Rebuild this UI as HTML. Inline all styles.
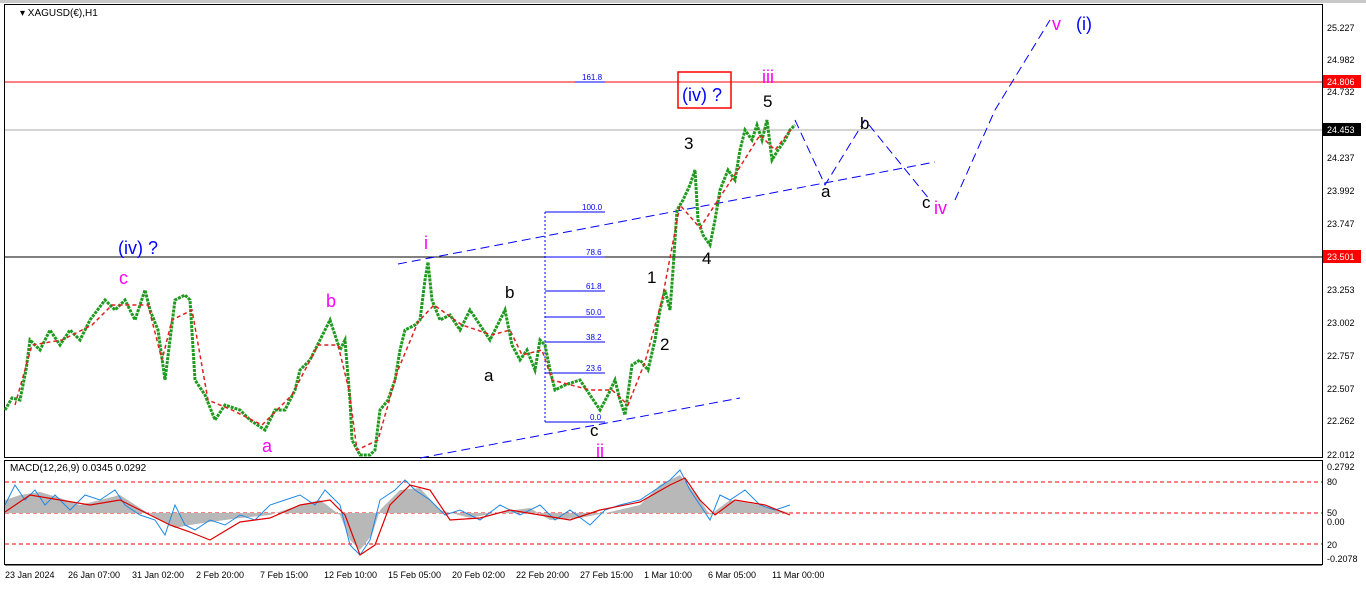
<!DOCTYPE html><html><head><style>body{margin:0;background:#fff;width:1366px;height:588px;overflow:hidden;font-family:"Liberation Sans",sans-serif}svg text{font-family:"Liberation Sans",sans-serif}</style></head><body>
<svg width="1366" height="588" xmlns="http://www.w3.org/2000/svg">
<rect width="1366" height="588" fill="#fff"/>
<rect x="0" y="0" width="1366" height="3" fill="#c8c8c8"/>
<rect x="4.5" y="4.5" width="1318" height="453" fill="none" stroke="#000"/>
<rect x="4.5" y="460.5" width="1318" height="104" fill="none" stroke="#000"/>
<g font-size="10" fill="#000">
<text x="20" y="16">▾ XAGUSD(€),H1</text>
<text x="10" y="471">MACD(12,26,9) 0.0345 0.0292</text>
</g>
<line x1="5" y1="82" x2="1322" y2="82" stroke="#f00"/>
<line x1="5" y1="130" x2="1322" y2="130" stroke="#aaa"/>
<line x1="5" y1="257" x2="1322" y2="257" stroke="#000"/>
<g stroke="#00f" fill="none">
<line x1="545" y1="212" x2="545" y2="422" stroke-dasharray="2,2"/>
<line x1="545" y1="422" x2="605" y2="422"/>
<line x1="545" y1="212" x2="605" y2="212"/>
<line x1="545" y1="257" x2="605" y2="257"/>
<line x1="545" y1="291" x2="605" y2="291"/>
<line x1="545" y1="317" x2="605" y2="317"/>
<line x1="545" y1="342" x2="605" y2="342"/>
<line x1="545" y1="373" x2="605" y2="373"/>
<line x1="575" y1="82" x2="605" y2="82"/>
</g>
<g font-size="8" fill="#00f"><text x="582" y="80">161.8</text><text x="582" y="210">100.0</text><text x="586" y="255">78.6</text><text x="586" y="289">61.8</text><text x="586" y="315">50.0</text><text x="586" y="340">38.2</text><text x="586" y="371">23.6</text><text x="590" y="420">0.0</text></g>
<g stroke="#00f" fill="none" stroke-dasharray="9,5">
<line x1="398" y1="264" x2="935" y2="162"/>
<line x1="420" y1="458" x2="740" y2="398"/>
<polyline points="795,120 825,185 865,120 930,200"/>
<polyline points="955,200 995,110 1050,20"/>
</g>
<polyline fill="none" stroke="#1f9a1f" stroke-width="3" stroke-dasharray="3,1" points="5,410 12,398 20,400 26,370 30,340 40,350 50,330 60,345 70,330 80,340 90,320 105,300 115,310 125,300 135,320 145,290 150,310 158,330 165,380 170,340 175,300 185,295 190,300 195,380 205,395 215,420 225,405 240,410 250,420 265,430 275,410 285,410 295,390 300,370 310,360 320,340 330,320 340,350 345,340 350,400 352,440 360,455 370,455 375,450 380,410 388,400 395,380 400,350 405,330 415,325 420,320 425,280 428,262 432,300 440,320 450,315 460,330 470,310 480,325 490,340 500,320 505,310 512,345 520,360 527,350 535,370 540,340 545,345 550,370 555,390 565,385 580,380 590,395 600,410 608,395 615,380 620,400 625,415 632,365 640,360 648,370 655,340 660,310 665,290 670,310 673,270 677,210 683,200 690,185 695,170 698,220 703,235 710,245 715,220 720,190 728,170 735,180 740,150 745,130 752,140 757,125 762,140 767,120 772,160 778,150 785,140 790,130 795,125"/>
<polyline fill="none" stroke="#e02020" stroke-width="1.5" stroke-dasharray="4,3" points="15,405 32,345 62,340 92,325 112,305 148,305 162,360 172,320 192,310 208,400 232,410 262,425 292,395 318,345 338,345 349,390 357,450 378,440 398,370 418,322 434,305 462,325 492,335 510,330 522,355 542,350 552,380 590,390 612,390 628,405 645,362 662,300 680,205 700,228 718,200 738,170 760,135 775,150 792,128"/>
<g font-size="9" fill="#000">
<text x="1327" y="31">25.227</text><text x="1327" y="63">24.982</text><text x="1327" y="95">24.732</text><text x="1327" y="161">24.237</text><text x="1327" y="194">23.992</text><text x="1327" y="227">23.747</text><text x="1327" y="293">23.253</text><text x="1327" y="326">23.002</text><text x="1327" y="359">22.757</text><text x="1327" y="392">22.507</text><text x="1327" y="424">22.262</text><text x="1327" y="458">22.012</text>
<text x="1327" y="470">0.2792</text><text x="1327" y="485">80</text><text x="1327" y="516">50</text><text x="1327" y="525">0.00</text><text x="1327" y="548">20</text><text x="1327" y="562">-0.2078</text>
</g>
<rect x="1323" y="75" width="38" height="13" fill="#f00"/><text x="1327" y="85" font-size="9" fill="#fff">24.806</text>
<rect x="1323" y="123" width="38" height="13" fill="#000"/><text x="1327" y="133" font-size="9" fill="#fff">24.453</text>
<rect x="1323" y="250" width="38" height="13" fill="#f00"/><text x="1327" y="260" font-size="9" fill="#fff">23.501</text>
<g font-size="18" fill="#00f"><text x="118" y="254">(iv) ?</text><text x="1076" y="30">(i)</text><text x="682" y="101">(iv) ?</text></g>
<rect x="678" y="72" width="53" height="36" fill="none" stroke="#f00" stroke-width="1.5"/>
<g font-size="18" fill="#f0f"><text x="119" y="284">c</text><text x="326" y="307">b</text><text x="262" y="452">a</text><text x="424" y="249">i</text><text x="596" y="457">ii</text><text x="762" y="83">iii</text><text x="934" y="214">iv</text><text x="1052" y="30">v</text></g>
<g font-size="17" fill="#000"><text x="505" y="298">b</text><text x="484" y="381">a</text><text x="590" y="436">c</text><text x="647" y="283">1</text><text x="660" y="350">2</text><text x="684" y="149">3</text><text x="702" y="264">4</text><text x="763" y="107">5</text><text x="821" y="197">a</text><text x="860" y="129">b</text><text x="922" y="208">c</text></g>
<g stroke="#f00" stroke-dasharray="4,3"><line x1="5" y1="482" x2="1322" y2="482"/><line x1="5" y1="513" x2="1322" y2="513"/><line x1="5" y1="544" x2="1322" y2="544"/></g>
<polygon fill="#b8b8b8" points="5,513 5,500 20,495 40,492 60,498 80,505 100,500 120,495 140,508 160,520 175,528 190,525 210,522 240,518 270,515 300,505 320,500 340,515 350,540 360,550 372,535 380,510 400,490 420,488 440,510 470,518 500,512 530,508 550,520 580,518 610,512 640,505 660,485 680,475 700,500 710,515 730,500 760,505 790,513"/>
<polyline fill="none" stroke="#1e88e5" stroke-width="1" points="5,505 15,485 25,500 35,490 45,505 55,495 70,510 85,495 100,500 115,490 125,505 140,515 155,520 165,535 175,505 185,525 195,530 210,520 225,525 240,515 255,520 270,505 285,500 300,495 315,505 325,490 340,505 350,545 360,555 370,540 380,500 395,490 405,480 415,490 430,500 445,515 460,510 480,520 500,505 520,515 540,505 555,520 570,510 590,525 605,510 620,505 640,500 655,490 670,480 680,470 690,490 700,505 710,520 720,495 730,500 745,490 760,505 775,510 790,505"/>
<polyline fill="none" stroke="#d00" stroke-width="1.2" points="5,512 30,495 60,500 90,505 120,500 150,515 170,525 190,532 210,540 240,522 270,518 300,505 330,500 345,515 360,555 375,545 390,505 410,485 430,490 450,520 480,518 510,510 540,515 570,520 600,510 640,502 670,485 685,478 700,500 715,515 735,500 765,505 790,515"/>
<line x1="5" y1="565" x2="1322" y2="565" stroke="#000"/>
<g font-size="9" fill="#000"><text x="5" y="578">23 Jan 2024</text><text x="68" y="578">26 Jan 07:00</text><text x="132" y="578">31 Jan 02:00</text><text x="196" y="578">2 Feb 20:00</text><text x="260" y="578">7 Feb 15:00</text><text x="324" y="578">12 Feb 10:00</text><text x="388" y="578">15 Feb 05:00</text><text x="452" y="578">20 Feb 02:00</text><text x="516" y="578">22 Feb 20:00</text><text x="580" y="578">27 Feb 15:00</text><text x="644" y="578">1 Mar 10:00</text><text x="708" y="578">6 Mar 05:00</text><text x="772" y="578">11 Mar 00:00</text></g>
</svg></body></html>
